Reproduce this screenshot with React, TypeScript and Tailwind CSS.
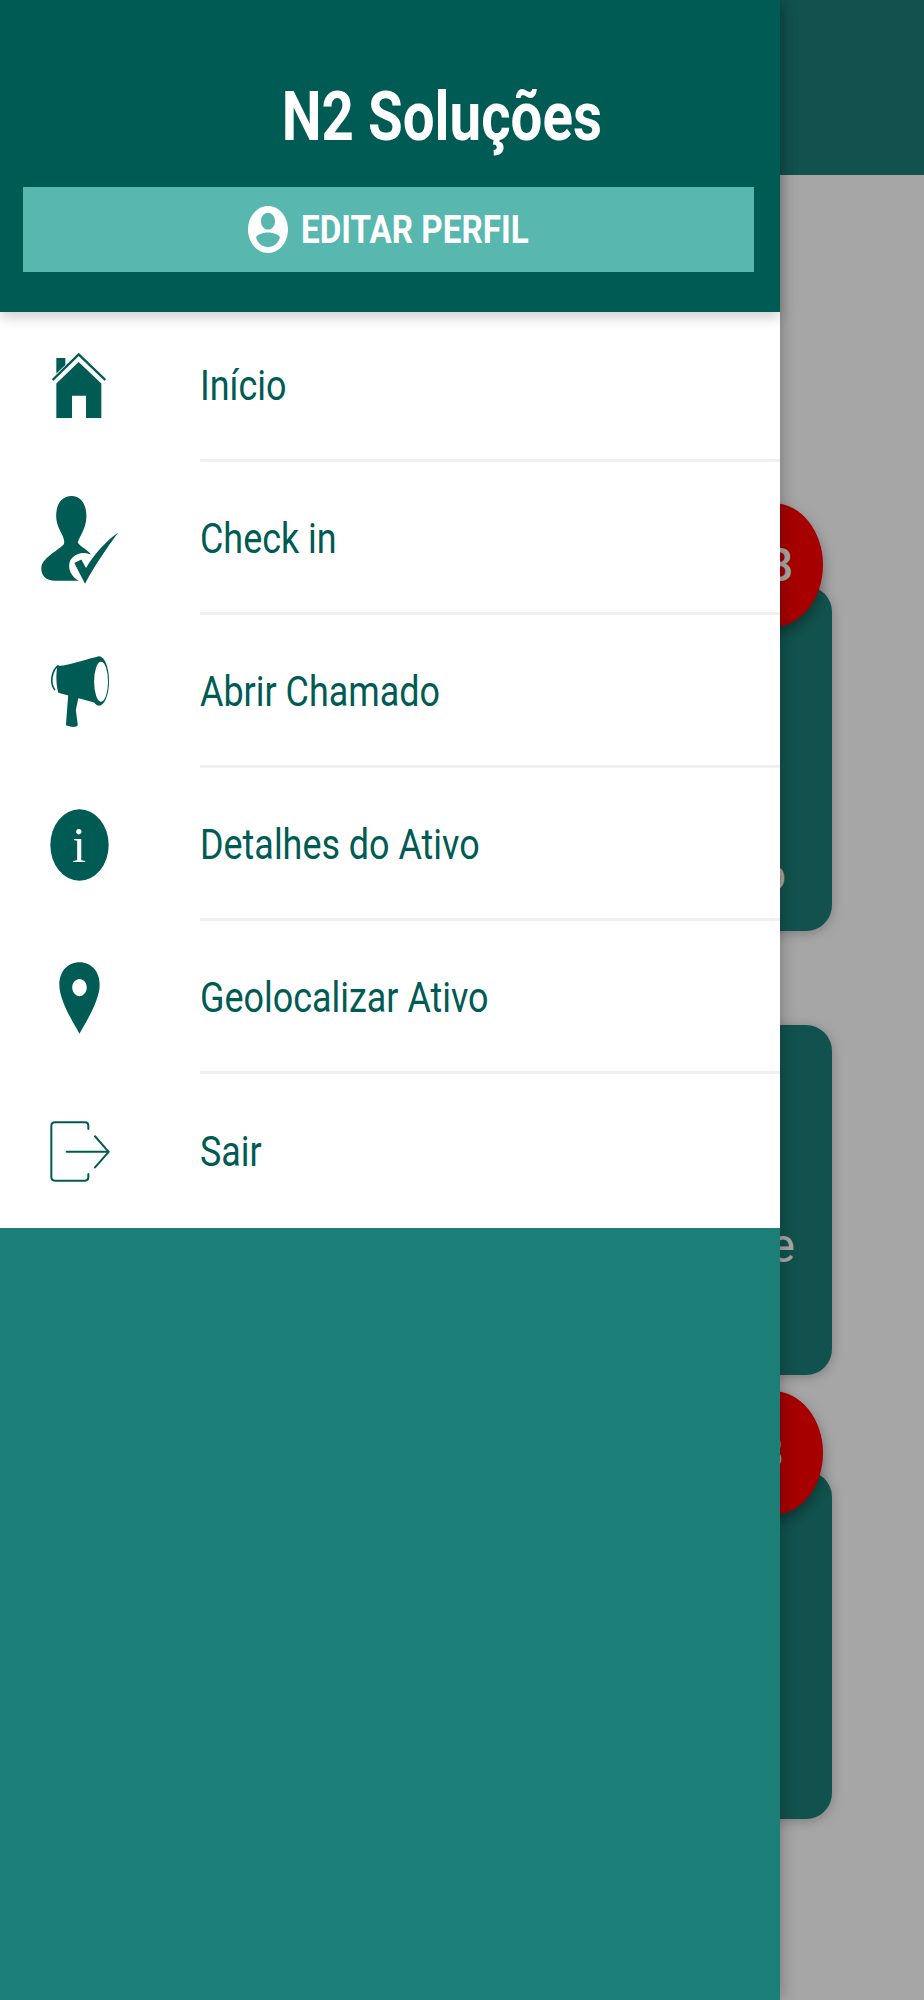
import React from "react";

const TEAL = "#005b54";

function Icon({ vb, className, children }: { vb: string; className: string; children: React.ReactNode }) {
  return (
    <svg viewBox={vb} preserveAspectRatio="none" className={className} fill={TEAL}>
      {children}
    </svg>
  );
}

const HomeIcon = () => (
  <Icon vb="158 98 162 202" className="w-[54px] h-[67px]">
    <path d="M171 116H198V137L171 163Z" />
    <path d="M160 182L238 105L318 182" fill="none" stroke={TEAL} strokeWidth="7" />
    <path d="M238 128L306 193V297H260V230H218V297H171V193Z" />
  </Icon>
);

const CheckIcon = () => (
  <Icon vb="122 530 234 266" className="w-[78px] h-[89px] mt-[4px] ml-[2px]">
    <path d="M213 530C245 530 260 560 258 595C256 630 238 650 232 668C240 682 262 690 272 705C250 695 225 700 210 722C200 745 212 770 235 783H165C135 783 122 765 123 745C125 715 170 695 190 675C195 665 188 650 180 635C170 615 166 600 168 580C170 550 188 530 213 530Z" />
    <path d="M222 730L243 720L257 745C285 700 320 662 353 640C320 685 285 735 254 792Z" />
  </Icon>
);

const MegaphoneIcon = () => (
  <Icon vb="150 1008 178 216" className="w-[59px] h-[72px]">
    <path d="M172 1038C168 1060 168 1095 175 1118L300 1152L298 1010C270 1012 220 1035 172 1038Z" />
    <ellipse cx="298" cy="1083" rx="30" ry="74" />
    <ellipse cx="304" cy="1085" rx="21" ry="60" fill="#fff" />
    <path d="M176 1036C155 1050 148 1090 165 1110" fill="none" stroke={TEAL} strokeWidth="5" />
    <path d="M205 1125L236 1132L228 1170L234 1216Q226 1226 198 1216Z" />
  </Icon>
);

const InfoIcon = () => (
  <Icon vb="150 207 178 216" className="w-[59px] h-[72px]">
    <ellipse cx="239" cy="315" rx="88" ry="107" />
    <text x="238" y="365" textAnchor="middle" fontFamily="'Liberation Serif', serif" fontSize="150" fill="#fff">i</text>
  </Icon>
);

const PinIcon = () => (
  <Icon vb="177 666 124 217" className="w-[41px] h-[72px]">
    <path fillRule="evenodd" d="M239 667C275 667 300 695 300 735C300 780 260 845 239 882C218 845 178 780 178 735C178 695 203 667 239 667ZM239 717C227 717 217 729 217 743C217 757 227 769 239 769C251 769 261 757 261 743C261 729 251 717 239 717Z" />
  </Icon>
);

const ExitIcon = () => (
  <Icon vb="150 1142 180 184" className="w-[60px] h-[61px] mt-[2px] ml-[1px]">
    <g fill="none" stroke={TEAL} strokeWidth="6" strokeLinecap="round" strokeLinejoin="round">
      <path d="M265 1166V1156Q265 1146 255 1146H165Q154 1146 154 1157V1311Q154 1322 165 1322H255Q265 1322 265 1312V1302" />
      <path d="M200 1235H325" />
      <path d="M285 1188L326 1235L285 1282" />
    </g>
  </Icon>
);

const items = [
  { label: "Início", icon: <HomeIcon /> },
  { label: "Check in", icon: <CheckIcon /> },
  { label: "Abrir Chamado", icon: <MegaphoneIcon /> },
  { label: "Detalhes do Ativo", icon: <InfoIcon /> },
  { label: "Geolocalizar Ativo", icon: <PinIcon /> },
  { label: "Sair", icon: <ExitIcon /> },
];

function Badge({ className }: { className: string }) {
  return (
    <div className={`absolute right-[9px] flex h-[124px] w-[100px] items-center justify-center rounded-[50%] bg-[#ff0000] font-medium text-white shadow-[0_6px_14px_rgba(0,0,0,0.35)] ${className}`}>
      8
    </div>
  );
}

const cardClass = "relative w-[740px] rounded-[26px] bg-[#1b7f78] shadow-[0_2px_12px_rgba(0,0,0,0.25)]";

export default function App() {
  return (
    <div className="relative h-[2000px] w-[924px] overflow-hidden bg-white" style={{ fontFamily: "Roboto, 'Liberation Sans', sans-serif" }}>
      <div className="h-[175px] bg-[#1b7f78]" />
      <div className="flex flex-col items-end pr-[92px] pt-[411px]">
        <div className={`${cardClass} h-[345px]`}>
          <Badge className="-top-[83px] pl-[14px] text-[46px]" />
          <div className="absolute right-[46px] top-[267px] text-[44px] leading-none text-white">o</div>
        </div>
        <div className={`${cardClass} mt-[94px] h-[350px]`}>
          <div className="absolute right-[37px] top-[197px] text-[48px] leading-none text-white">e</div>
        </div>
        <div className={`${cardClass} mt-[96px] h-[348px]`}>
          <Badge className="-top-[80px] pr-[4px] text-[44px]" />
        </div>
      </div>

      <div className="absolute inset-0 bg-black/35" />

      <div className="absolute inset-y-0 left-0 flex w-[780px] flex-col bg-[#1b7f78] shadow-[0_0_16px_rgba(0,0,0,0.3)]">
        <div className="relative z-10 h-[312px] shrink-0 bg-[#005b54] px-[23px] shadow-[0_6px_12px_rgba(0,0,0,0.18)]">
          <div className="flex h-[187px] items-end justify-center pb-[30px] pl-[104px]">
            <span className="inline-block origin-center scale-x-[0.83] text-[68px] font-bold leading-[80px] text-white whitespace-nowrap">N2 Soluções</span>
          </div>
          <div className="flex h-[85px] w-[731px] items-center justify-center gap-[13px] bg-[#58b7ae]">
            <svg viewBox="0 0 40 48" preserveAspectRatio="none" className="h-[47px] w-[40px]">
              <path fillRule="evenodd" fill="#fff" d="M20 0C31 0 40 10.7 40 24C40 37.3 31 48 20 48C9 48 0 37.3 0 24C0 10.7 9 0 20 0ZM20 7C15.8 7 13 11 13 15.5C13 20 15.8 24 20 24C24.2 24 27 20 27 15.5C27 11 24.2 7 20 7ZM20 27C14 27 9 29.5 8 32C9.5 38 14 42 20 42C26 42 30.5 38 32 32C31 29.5 26 27 20 27Z" />
            </svg>
            <span className="inline-block w-[228px] text-[38px] font-bold leading-none text-white whitespace-nowrap">
              <span className="inline-block origin-left scale-x-[0.875]">EDITAR PERFIL</span>
            </span>
          </div>
        </div>
        <div className="-mt-[3px] bg-white pb-px">
          {items.map((item, i) => (
            <div key={item.label} className="flex h-[153px] items-center">
              <div className="flex w-[158px] shrink-0 justify-center">{item.icon}</div>
              <div className={`ml-[42px] flex h-full flex-1 items-center pt-[2px] ${i < items.length - 1 ? "border-b-[3px] border-[#efeff4]" : ""}`}>
                <span className="inline-block origin-left scale-x-[0.835] text-[43px] leading-none text-[#005b54] whitespace-nowrap">{item.label}</span>
              </div>
            </div>
          ))}
        </div>
      </div>
    </div>
  );
}
